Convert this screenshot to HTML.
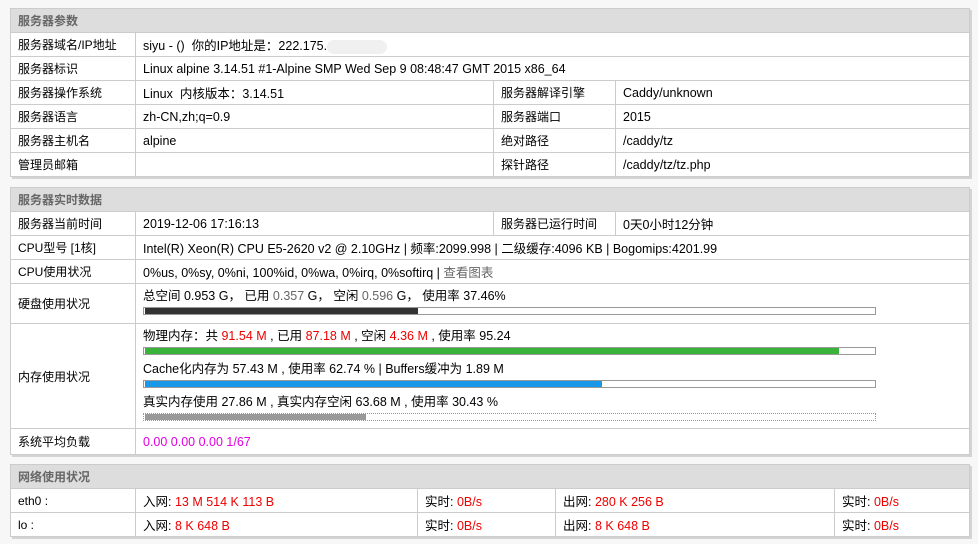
<!DOCTYPE html>
<html><head><meta charset="utf-8"><style>
body{margin:0;background:#f7f7f7;font-family:"Liberation Sans","Noto Sans CJK SC",sans-serif;font-size:12.5px;color:#000;width:978px;height:544px;overflow:hidden;position:relative}
table{position:absolute;left:10px;width:960px;border-collapse:collapse;background:#fff;table-layout:fixed;box-shadow:2px 2px 0 #d4d4d4;border:1px solid #ccc}
td,th{border:1px solid #ccc;padding:0 0 0 7px;height:23px;white-space:nowrap;overflow:hidden;text-align:left;vertical-align:middle}
th{background:#ddd;color:#666;font-weight:bold;height:23px;font-size:12px}
td:first-child{font-size:12px}
.r{color:#e00}.m{color:#e000e0}.g{color:#666}
.ln{line-height:16px;height:16px}
.bar{height:6px;border:1px solid #999;margin:3px 0 0 0;width:731px;position:relative;background:#fff}
.bar i{position:absolute;left:1px;top:0;bottom:0;display:block}
.mem{vertical-align:top;padding-top:4px;box-sizing:border-box}
.mem .bar{margin-bottom:6px}
</style></head><body>
<table style="top:8px">
<colgroup><col style="width:125px"><col style="width:358px"><col style="width:122px"><col></colgroup>
<tr><th colspan="4">服务器参数</th></tr>
<tr><td>服务器域名/IP地址</td><td colspan="3">siyu - ()&nbsp; 你的IP地址是：222.175.<span style="display:inline-block;width:60px;height:14px;background:#f0f0f0;border-radius:7px;vertical-align:middle"></span></td></tr>
<tr><td>服务器标识</td><td colspan="3">Linux alpine 3.14.51 #1-Alpine SMP Wed Sep 9 08:48:47 GMT 2015 x86_64</td></tr>
<tr><td>服务器操作系统</td><td>Linux&nbsp; 内核版本：3.14.51</td><td style="font-size:12px">服务器解译引擎</td><td>Caddy/unknown</td></tr>
<tr><td>服务器语言</td><td>zh-CN,zh;q=0.9</td><td style="font-size:12px">服务器端口</td><td>2015</td></tr>
<tr><td>服务器主机名</td><td>alpine</td><td style="font-size:12px">绝对路径</td><td>/caddy/tz</td></tr>
<tr><td>管理员邮箱</td><td></td><td style="font-size:12px">探针路径</td><td>/caddy/tz/tz.php</td></tr>
</table>
<table style="top:187px">
<colgroup><col style="width:125px"><col style="width:358px"><col style="width:122px"><col></colgroup>
<tr><th colspan="4">服务器实时数据</th></tr>
<tr><td>服务器当前时间</td><td>2019-12-06 17:16:13</td><td style="font-size:12px">服务器已运行时间</td><td>0天0小时12分钟</td></tr>
<tr><td>CPU型号 [1核]</td><td colspan="3">Intel(R) Xeon(R) CPU E5-2620 v2 @ 2.10GHz | 频率:2099.998 | 二级缓存:4096 KB | Bogomips:4201.99</td></tr>
<tr><td>CPU使用状况</td><td colspan="3">0%us, 0%sy, 0%ni, 100%id, 0%wa, 0%irq, 0%softirq | <span class="g">查看图表</span></td></tr>
<tr><td style="height:39px">硬盘使用状况</td><td colspan="3" class="mem" style="height:39px"><div class="ln">总空间 0.953 G， 已用 <span class="g">0.357</span> G， 空闲 <span class="g">0.596</span> G， 使用率 37.46%</div><div class="bar"><i style="width:273px;background:#333"></i></div></td></tr>
<tr><td style="height:104px">内存使用状况</td><td colspan="3" class="mem" style="height:104px"><div class="ln">物理内存：共 <span class="r">91.54 M</span> , 已用 <span class="r">87.18 M</span> , 空闲 <span class="r">4.36 M</span> , 使用率 95.24</div><div class="bar"><i style="width:694px;background:#3ab33a"></i></div><div class="ln">Cache化内存为 57.43 M , 使用率 62.74 % | Buffers缓冲为 1.89 M</div><div class="bar"><i style="width:457px;background:#1a98e8"></i></div><div class="ln">真实内存使用 27.86 M , 真实内存空闲 63.68 M , 使用率 30.43 %</div><div class="bar" style="border-style:dotted;margin-bottom:0"><i style="width:221px;background:#999"></i></div></td></tr>
<tr><td style="height:25px">系统平均负载</td><td colspan="3" class="m">0.00 0.00 0.00 1/67</td></tr>
</table>
<table style="top:464px">
<colgroup><col style="width:125px"><col style="width:282px"><col style="width:138px"><col style="width:279px"><col></colgroup>
<tr><th colspan="5">网络使用状况</th></tr>
<tr><td>eth0 :</td><td>入网: <span class="r">13 M 514 K 113 B</span></td><td>实时: <span class="r">0B/s</span></td><td>出网: <span class="r">280 K 256 B</span></td><td>实时: <span class="r">0B/s</span></td></tr>
<tr><td>lo :</td><td>入网: <span class="r">8 K 648 B</span></td><td>实时: <span class="r">0B/s</span></td><td>出网: <span class="r">8 K 648 B</span></td><td>实时: <span class="r">0B/s</span></td></tr>
</table>
</body></html>
